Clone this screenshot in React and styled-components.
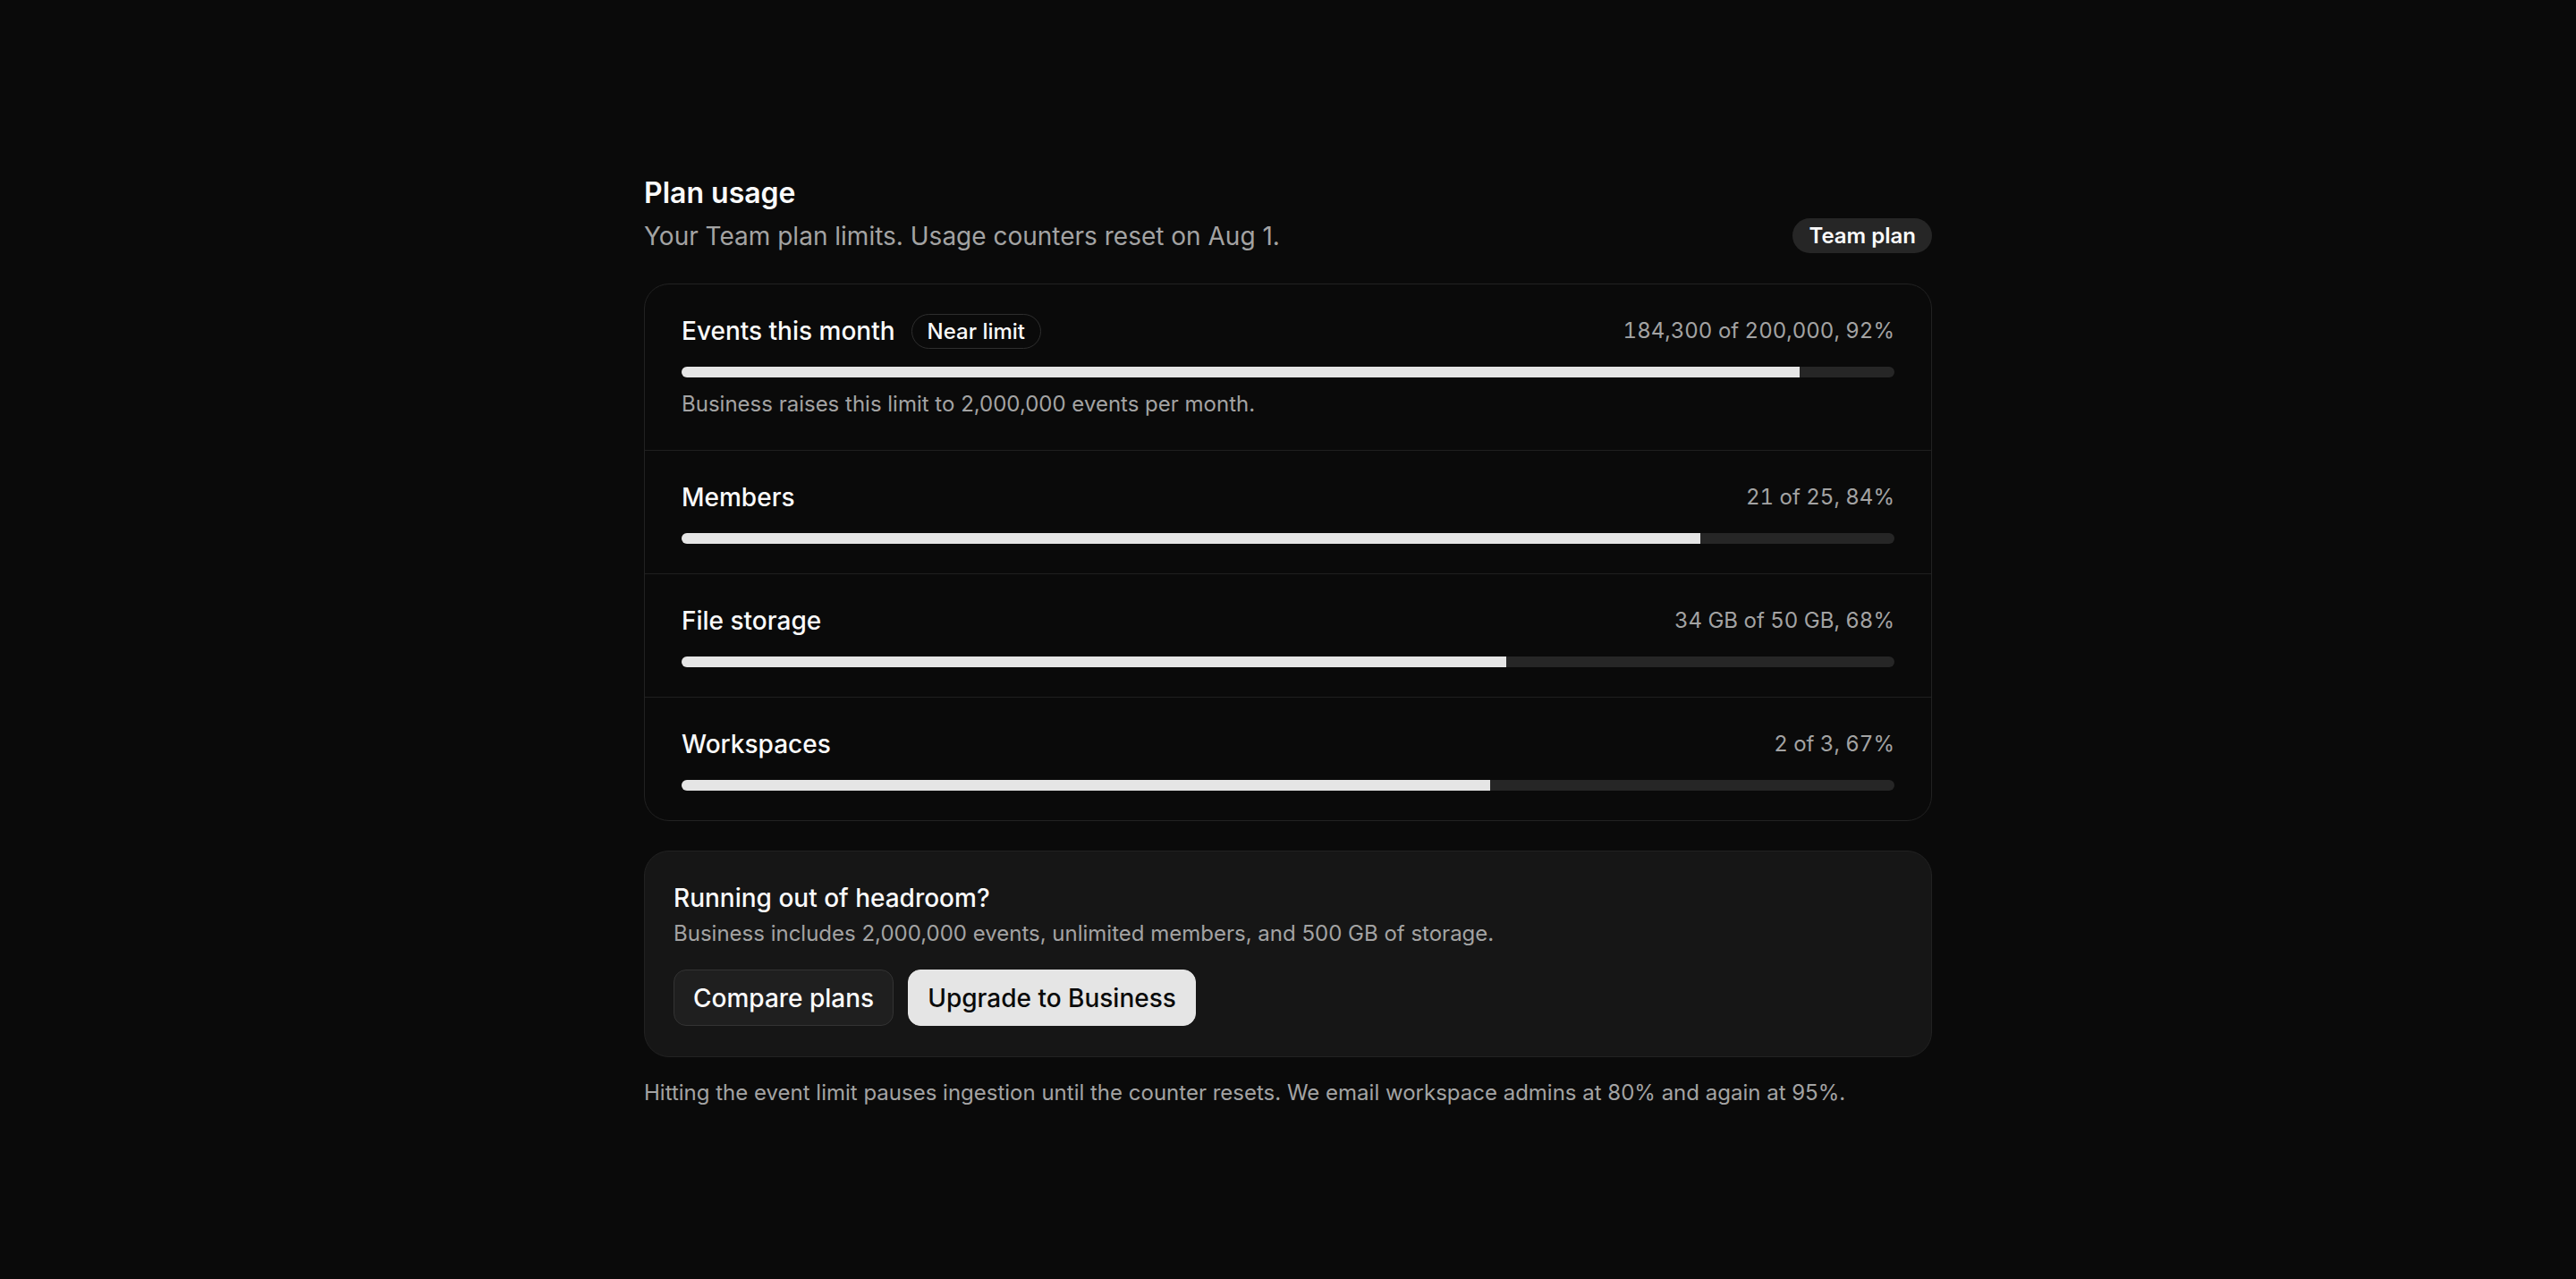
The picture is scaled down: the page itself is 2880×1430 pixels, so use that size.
import React from "react";
import styled, { createGlobalStyle } from "styled-components";

const GlobalStyle = createGlobalStyle`
  html, body {
    margin: 0;
    padding: 0;
    background: #0a0a0a;
  }
  body {
    font-family: Inter, "Noto Sans", "Liberation Sans", sans-serif;
    color: #fafafa;
    -webkit-font-smoothing: antialiased;
  }
  * { box-sizing: border-box; }
`;

const Page = styled.main`
  width: 1440px;
  margin: 0 auto;
  padding: 196px 0 120px;
  display: flex;
  flex-direction: column;
`;

const Header = styled.header`
  display: flex;
  align-items: flex-end;
  justify-content: space-between;
  margin-bottom: 33px;
`;

const HeadText = styled.div`
  display: flex;
  flex-direction: column;
  gap: 8px;
`;

const Title = styled.h1`
  margin: 0;
  font-size: 32px;
  line-height: 40px;
  font-weight: 600;
  color: #fafafa;
`;

const Subtitle = styled.p`
  margin: 0;
  font-size: 28px;
  line-height: 40px;
  color: #a3a3a3;
`;

const PlanPill = styled.span`
  display: inline-flex;
  align-items: center;
  height: 39px;
  padding: 0 18px;
  border-radius: 999px;
  background: #262626;
  color: #fafafa;
  font-size: 24px;
  font-weight: 600;
  margin-bottom: 1px;
`;

const UsageCard = styled.section`
  border: 1px solid #222222;
  border-radius: 28px;
  background: #0a0a0a;
  overflow: hidden;
`;

const Row = styled.div`
  padding: 32px 41px 33px;
  border-top: ${(p) => (p.$first ? "none" : "1px solid #1f1f1f")};
  display: flex;
  flex-direction: column;
`;

const RowHead = styled.div`
  display: flex;
  align-items: center;
  justify-content: space-between;
  height: 40px;
  margin-bottom: 20px;
`;

const LabelGroup = styled.div`
  display: flex;
  align-items: center;
  gap: 18px;
`;

const Label = styled.span`
  font-size: 28px;
  line-height: 40px;
  font-weight: 500;
  color: #fafafa;
`;

const StatusTag = styled.span`
  display: inline-flex;
  align-items: center;
  height: 39px;
  padding: 0 17px;
  border: 1px solid #2e2e2e;
  border-radius: 999px;
  font-size: 24px;
  font-weight: 500;
  color: #fafafa;
`;

const Amount = styled.span`
  font-size: 24px;
  line-height: 36px;
  color: #a3a3a3;
  font-variant-numeric: tabular-nums;
`;

const Track = styled.div`
  height: 12px;
  border-radius: 999px;
  background: #262626;
  overflow: hidden;
`;

const Fill = styled.div`
  height: 100%;
  background: #e5e5e5;
`;

const RowNote = styled.p`
  margin: 12px 0 0;
  font-size: 24px;
  line-height: 36px;
  color: #a3a3a3;
`;

const Upsell = styled.section`
  margin-top: 33px;
  border: 1px solid #222222;
  border-radius: 28px;
  background: #161616;
  padding: 32px 32px 34px;
  display: flex;
  flex-direction: column;
`;

const UpsellTitle = styled.h2`
  margin: 0;
  font-size: 28px;
  line-height: 40px;
  font-weight: 500;
  color: #fafafa;
`;

const UpsellText = styled.p`
  margin: 2px 0 0;
  font-size: 24px;
  line-height: 36px;
  color: #a3a3a3;
`;

const Actions = styled.div`
  display: flex;
  gap: 16px;
  margin-top: 22px;
`;

const Button = styled.button`
  height: 63px;
  padding: 0 21px;
  border-radius: 14px;
  font-family: inherit;
  font-size: 28px;
  font-weight: 500;
  cursor: pointer;
  border: 1px solid ${(p) => (p.$primary ? "#e5e5e5" : "#333333")};
  background: ${(p) => (p.$primary ? "#e5e5e5" : "#1f1f1f")};
  color: ${(p) => (p.$primary ? "#0a0a0a" : "#fafafa")};
`;

const Footnote = styled.p`
  margin: 23px 0 0;
  font-size: 24px;
  line-height: 34px;
  color: #a3a3a3;
`;

const meters = [
  {
    label: "Events this month",
    tag: "Near limit",
    amount: "184,300 of 200,000, 92%",
    pct: 92.15,
    note: "Business raises this limit to 2,000,000 events per month.",
  },
  { label: "Members", amount: "21 of 25, 84%", pct: 84 },
  { label: "File storage", amount: "34 GB of 50 GB, 68%", pct: 68 },
  { label: "Workspaces", amount: "2 of 3, 67%", pct: 66.67 },
];

export default function App() {
  return (
    <>
      <GlobalStyle />
      <Page>
        <Header>
          <HeadText>
            <Title>Plan usage</Title>
            <Subtitle>Your Team plan limits. Usage counters reset on Aug 1.</Subtitle>
          </HeadText>
          <PlanPill>Team plan</PlanPill>
        </Header>

        <UsageCard>
          {meters.map((m, i) => (
            <Row key={m.label} $first={i === 0}>
              <RowHead>
                <LabelGroup>
                  <Label>{m.label}</Label>
                  {m.tag && <StatusTag>{m.tag}</StatusTag>}
                </LabelGroup>
                <Amount>{m.amount}</Amount>
              </RowHead>
              <Track>
                <Fill style={{ width: `${m.pct}%` }} />
              </Track>
              {m.note && <RowNote>{m.note}</RowNote>}
            </Row>
          ))}
        </UsageCard>

        <Upsell>
          <UpsellTitle>Running out of headroom?</UpsellTitle>
          <UpsellText>
            Business includes 2,000,000 events, unlimited members, and 500 GB of storage.
          </UpsellText>
          <Actions>
            <Button>Compare plans</Button>
            <Button $primary>Upgrade to Business</Button>
          </Actions>
        </Upsell>

        <Footnote>
          Hitting the event limit pauses ingestion until the counter resets. We email workspace
          admins at 80% and again at 95%.
        </Footnote>
      </Page>
    </>
  );
}
